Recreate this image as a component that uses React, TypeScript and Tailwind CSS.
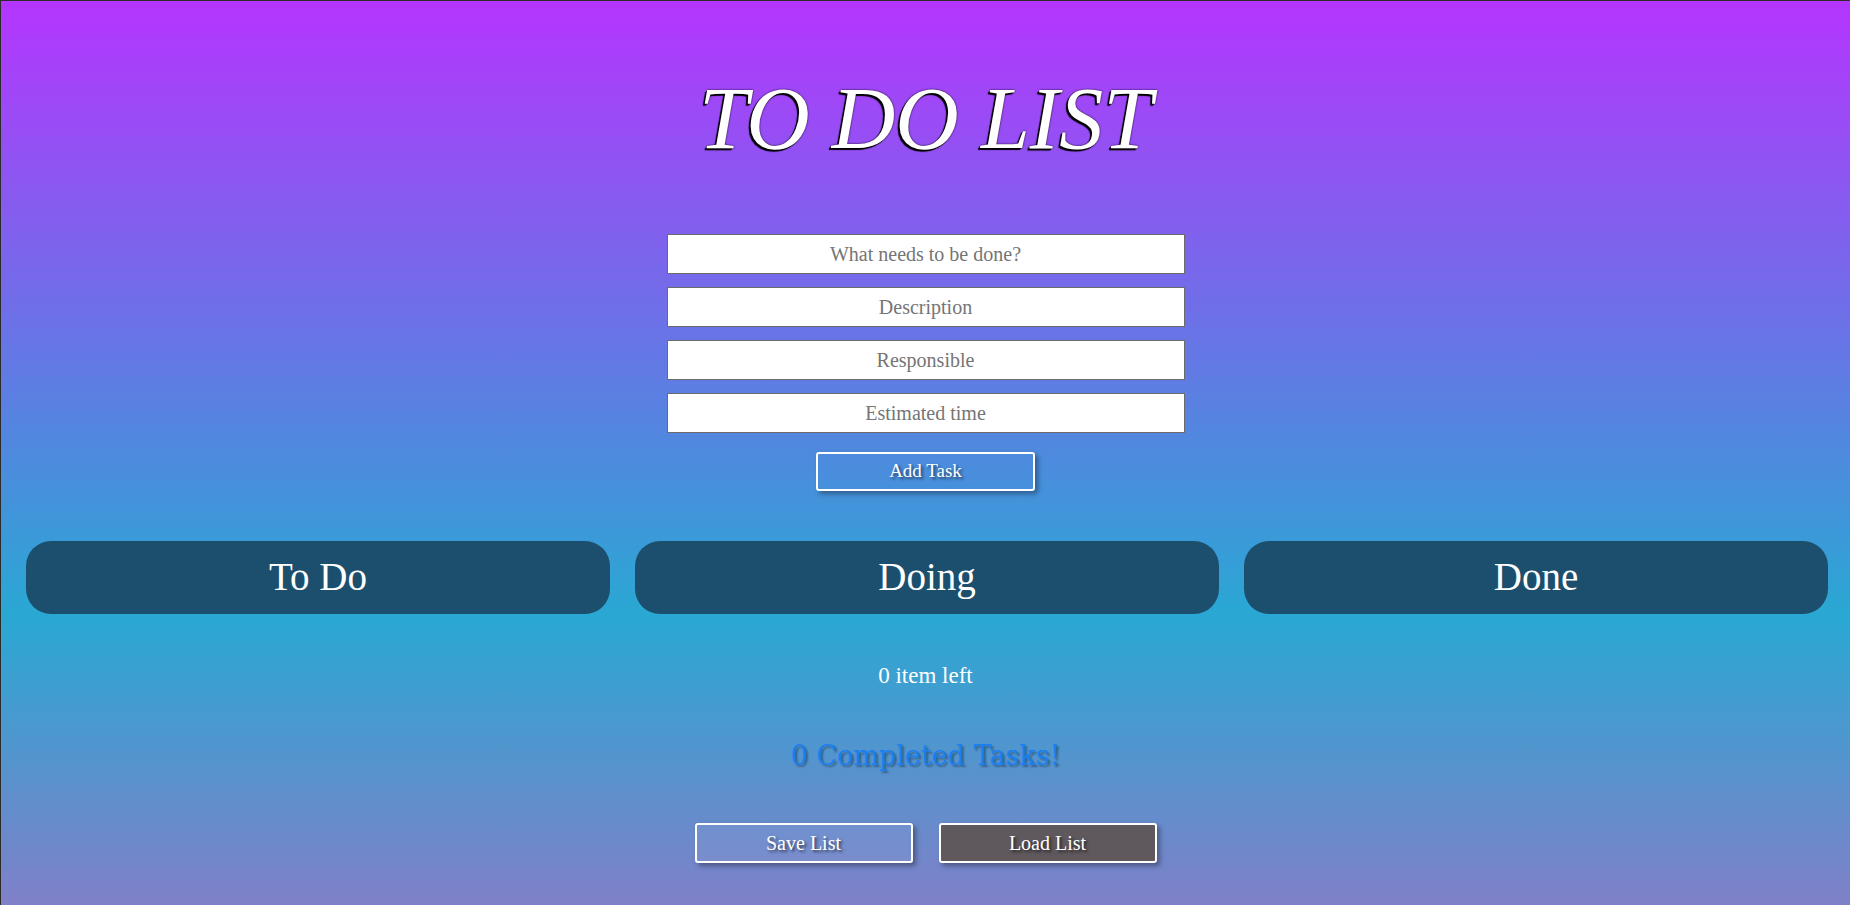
import React from 'react';

const fields = ['What needs to be done?', 'Description', 'Responsible', 'Estimated time'];
const columns = ['To Do', 'Doing', 'Done'];

const App: React.FC = () => {
  return (
    <div className="h-[905px] w-full overflow-hidden border-t border-l border-[#2b2b2b] bg-[linear-gradient(to_bottom,#b535fe_0%,#4e8ade_50%,#29a8d3_68%,#8080c8_100%)] font-['Liberation_Serif',serif] text-white">
      {/* Header */}
      <h1 className="pt-[68px] text-center text-[88px] italic leading-[100px] [text-shadow:-2px_2px_1px_#000,-1px_1px_0_#000,0_0_2px_#000]">
        TO DO LIST
      </h1>

      {/* Form */}
      <div className="mt-[65px] flex flex-col items-center gap-[13px]">
        {fields.map((field) => (
          <input
            key={field}
            type="text"
            placeholder={field}
            className="h-[40px] w-[518px] border border-[#6b6b6b] bg-white text-center text-[20px] text-black outline-none placeholder:text-[#757575]"
          />
        ))}
        <button className="mt-[6px] h-[39px] w-[219px] rounded-[3px] border-2 border-white text-[19px] shadow-[3px_3px_5px_rgba(0,0,0,0.35)] [text-shadow:2px_2px_3px_rgba(0,0,0,0.6)]">
          Add Task
        </button>
      </div>

      {/* Columns */}
      <div className="mt-[50px] flex gap-[25px] pl-[25px] pr-[22px]">
        {columns.map((col) => (
          <div
            key={col}
            className="flex h-[73px] flex-1 items-center justify-center rounded-[25px] bg-[#1c4f6d] text-[39px]"
          >
            {col}
          </div>
        ))}
      </div>

      <p className="mt-[48px] text-center text-[23px] leading-[28px]">0 item left</p>

      <h2 className="mt-[50px] text-center font-['DejaVu_Serif',serif] text-[27px] leading-[31px] text-[#1a7ff0] [text-shadow:2px_2px_2px_rgba(0,0,0,0.35)]">
        0 Completed Tasks!
      </h2>

      {/* Footer actions */}
      <div className="mt-[52px] flex justify-center gap-[26px]">
        <button className="h-[40px] w-[218px] rounded-[3px] border-2 border-white bg-white/5 text-[20px] shadow-[3px_3px_5px_rgba(0,0,0,0.35)] [text-shadow:2px_2px_3px_rgba(0,0,0,0.6)]">
          Save List
        </button>
        <button className="h-[40px] w-[218px] rounded-[3px] border-2 border-white bg-[#5f585c] text-[20px] shadow-[3px_3px_5px_rgba(0,0,0,0.35)] [text-shadow:2px_2px_3px_rgba(0,0,0,0.6)]">
          Load List
        </button>
      </div>
    </div>
  );
};

export default App;
